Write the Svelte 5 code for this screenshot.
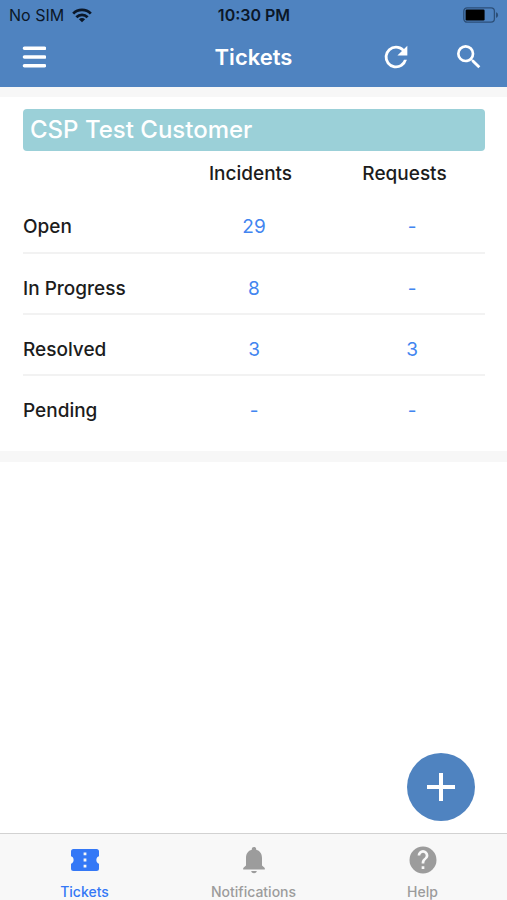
<script>
  const customer = 'CSP Test Customer';
  const rows = [
    { status: 'Open', incidents: '29', requests: '-' },
    { status: 'In Progress', incidents: '8', requests: '-' },
    { status: 'Resolved', incidents: '3', requests: '3' },
    { status: 'Pending', incidents: '-', requests: '-' }
  ];
  const tabs = ['Tickets', 'Notifications', 'Help'];
  let active = $state('Tickets');
</script>

<div class="app">
  <header>
    <div class="status">
      <div class="carrier">
        <span>No SIM</span>
        <svg width="20" height="15" viewBox="0 0 20 15" aria-hidden="true">
          <g fill="none" stroke="#0b1728" stroke-width="2.8">
            <path d="M1.2 5.6C6 .6 14 .6 18.8 5.6" />
            <path d="M4.4 9.2C7.500 6 12.500 6 15.600 9.200" />
          </g>
          <path d="M10 14.2 6.9 11.300C8.600 9.700 11.400 9.700 13.100 11.300Z" fill="#0b1728" />
        </svg>
      </div>
      <time>10:30 PM</time>
      <svg class="battery" width="36" height="16" viewBox="0 0 36 16" aria-hidden="true">
        <rect x=".8" y=".8" width="30.6" height="14.4" rx="3.4" fill="none" stroke="#2c4f78" stroke-width="1.3" />
        <rect x="2.6" y="2.6" width="19" height="10.8" rx="1.2" fill="#000" />
        <path d="M33 5.2C35.8 5.8 35.8 10.2 33 10.8Z" fill="#2c4f78" />
      </svg>
    </div>
    <nav class="toolbar" aria-label="Toolbar">
      <div class="side">
        <button aria-label="Menu">
          <svg width="24" height="24" viewBox="0 0 24 24">
            <path d="M2.500 3.300H22.500M2.500 12H22.500M2.500 20.700H22.500" stroke="#fff" stroke-width="3.600" stroke-linecap="round" />
          </svg>
        </button>
      </div>
      <h1>Tickets</h1>
      <div class="side end">
        <button aria-label="Refresh">
          <svg width="34" height="34" viewBox="0 0 24 24" fill="#fff">
            <path d="M17.65 6.35A7.96 7.96 0 0 0 12 4a8 8 0 1 0 7.73 10h-2.08A6 6 0 1 1 12 6c1.66 0 3.14.69 4.22 1.78L13 11h7V4z" />
          </svg>
        </button>
        <button aria-label="Search">
          <svg width="32" height="32" viewBox="0 0 24 24" fill="#fff">
            <path d="M15.5 14h-.79l-.28-.27A6.47 6.47 0 0 0 16 9.5 6.5 6.5 0 1 0 9.5 16c1.61 0 3.09-.59 4.23-1.57l.27.28v.79l5 4.99L20.49 19zm-6 0a4.5 4.5 0 1 1 0-9 4.5 4.5 0 0 1 0 9z" />
          </svg>
        </button>
      </div>
    </nav>
  </header>

  <main>
    <section>
      <h2>{customer}</h2>
      <table>
        <thead>
          <tr>
            <td></td>
            <th scope="col">Incidents</th>
            <th scope="col">Requests</th>
          </tr>
        </thead>
        <tbody>
          {#each rows as row}
            <tr>
              <th scope="row">{row.status}</th>
              <td><a href="#incidents">{row.incidents}</a></td>
              <td><a href="#requests">{row.requests}</a></td>
            </tr>
          {/each}
        </tbody>
      </table>
    </section>
  </main>

  <div class="dock">
    <button class="add" aria-label="New ticket">
      <svg width="30" height="30" viewBox="0 0 30 30">
        <path d="M15 1V29M1 15H29" stroke="#fff" stroke-width="4" />
      </svg>
    </button>
    <nav class="tabs" aria-label="Sections">
      {#each tabs as tab}
        <button class:active={active === tab} onclick={() => (active = tab)}>
          <svg width="30" height="30" viewBox="0 0 30 30" fill="currentColor" aria-hidden="true">
            {#if tab === 'Tickets'}
              <path fill-rule="evenodd" d="M3.5 4H26.5Q29 4 29 6.5V11.3C25.500 12 25.500 18 29 18.7V23.5Q29 26 26.5 26H3.5Q1 26 1 23.5V18.7C4.500 18 4.500 12 1 11.3V6.5Q1 4 3.5 4ZM13.6 7.4V10.2H16.4V7.4ZM13.6 13.6V16.4H16.4V13.6ZM13.6 19.8V22.6H16.4V19.8Z" />
            {:else if tab === 'Notifications'}
              <path d="M15 2C16.3 2 17.2 2.8 17.2 4.2V4.8C21 5.8 23 8.8 23 13V20.5L25.8 23V24.5H4.2V23L7 20.5V13C7 8.8 9 5.8 12.8 4.8V4.2C12.8 2.8 13.7 2 15 2ZM12.2 26H17.8C17.4 29 12.6 29 12.2 26Z" />
            {:else}
              <path fill-rule="evenodd" d="M15 1.5A13.5 13.5 0 1 0 15 28.5 13.5 13.5 0 0 0 15 1.5ZM13.65 24V21.3H16.35V24ZM19.14 13.54 17.93 14.78C16.96 15.76 16.35 16.57 16.35 18.6H13.65V17.92C13.65 16.43 14.26 15.08 15.23 14.1L16.91 12.4A2.7 2.7 0 1 0 12.3 10.5H9.6A5.4 5.4 0 0 1 20.4 10.5C20.4 11.69 19.92 12.76 19.14 13.54Z" />
            {/if}
          </svg>
          <span>{tab}</span>
        </button>
      {/each}
    </nav>
  </div>
</div>

<style>
  :global(body) {
    margin: 0;
    background: #fff;
  }
  .app {
    min-height: 100vh;
    display: flex;
    flex-direction: column;
    font-family: Inter, 'Liberation Sans', sans-serif;
    color: #1c1c1c;
  }
  button {
    display: flex;
    align-items: center;
    justify-content: center;
    padding: 0;
    border: 0;
    background: none;
    font: inherit;
    color: inherit;
    cursor: pointer;
  }
  svg {
    display: block;
  }
  header {
    padding-bottom: 3px;
    background: #4f83c0;
  }
  .status {
    height: 30px;
    padding: 0 8px 0 9px;
    display: grid;
    grid-template-columns: 1fr auto 1fr;
    align-items: center;
    font-size: 16px;
    color: #0b1728;
  }
  .carrier {
    display: flex;
    align-items: center;
    gap: 8px;
  }
  time {
    font-weight: 600;
  }
  .battery {
    justify-self: end;
  }
  .toolbar {
    height: 54px;
    padding: 0 22px;
    display: grid;
    grid-template-columns: 1fr auto 1fr;
    align-items: center;
  }
  .side {
    display: flex;
  }
  .end {
    justify-content: flex-end;
    gap: 40px;
  }
  h1 {
    margin: 0;
    font-size: 22px;
    font-weight: 600;
    color: #fff;
  }
  main {
    flex: 1;
  }
  section {
    padding: 12px 22px 15px 23px;
    border-top: 10px solid #f7f7f7;
    border-bottom: 11px solid #f7f7f7;
  }
  h2 {
    margin: 0;
    padding: 0 7px;
    border-radius: 4px;
    background: #9bd0d8;
    font-size: 24px;
    line-height: 42px;
    font-weight: 500;
    color: #fff;
  }
  table {
    width: 100%;
    table-layout: fixed;
    border-collapse: collapse;
    font-size: 19px;
    line-height: 24px;
    text-align: center;
  }
  th {
    padding: 0;
    font-weight: 500;
  }
  td {
    padding: 0;
  }
  thead th {
    height: 36px;
    padding: 5px 7px 0 0;
  }
  tbody th {
    text-align: left;
  }
  tbody tr {
    height: 61px;
  }
  tbody th,
  tbody td {
    padding-top: 10px;
  }
  tbody tr:not(:last-child) {
    border-bottom: 2px solid #f2f2f2;
  }
  tbody td:last-child {
    padding-left: 8px;
  }
  a {
    color: #4285f0;
    text-decoration: none;
  }
  .dock {
    position: sticky;
    bottom: 0;
  }
  .add {
    position: absolute;
    right: 32px;
    bottom: 79px;
    width: 68px;
    height: 68px;
    border-radius: 50%;
    background: #4f83c0;
  }
  .tabs {
    display: grid;
    grid-template-columns: repeat(3, 1fr);
    border-top: 1px solid #d2d2d2;
    background: #f8f8f8;
    color: #9c9c9c;
  }
  .tabs button {
    flex-direction: column;
    gap: 8px;
    padding-top: 11px;
    font-size: 14px;
    line-height: 17px;
    font-weight: 500;
  }
  .tabs .active {
    color: #3478f6;
  }
</style>
